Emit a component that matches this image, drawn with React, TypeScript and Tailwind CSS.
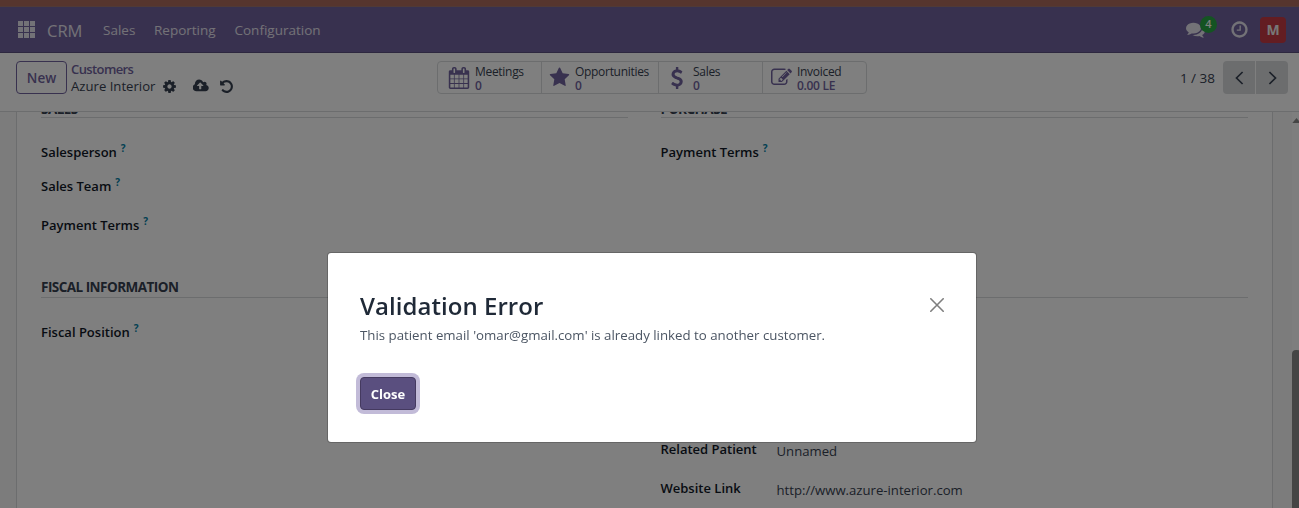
import type { ReactNode } from "react";

const paths = {
  star: "M1728 647q0 22-26 48l-363 354 86 500q1 7 1 20 0 21-10.5 35.5t-30.5 14.5q-19 0-40-12l-449-236-449 236q-22 12-40 12-21 0-31.5-14.5t-10.5-35.5q0-6 2-20l86-500-364-354q-25-27-25-48 0-37 56-46l502-73 225-455q19-41 49-41t49 41l225 455 502 73q56 9 56 46z",
  calendar:
    "M192 1664h288v-288h-288v288zm352 0h320v-288h-320v288zm-352-352h288v-320h-288v320zm352 0h320v-320h-320v320zm-352-384h288v-288h-288v288zm736 736h320v-288h-320v288zm-384-736h320v-288h-320v288zm768 736h288v-288h-288v288zm-384-352h320v-320h-320v320zm-352-864v-288q0-13-9.5-22.5t-22.5-9.5h-64q-13 0-22.5 9.5t-9.5 22.5v288q0 13 9.5 22.5t22.5 9.5h64q13 0 22.5-9.5t9.5-22.5zm736 864h288v-320h-288v320zm-384-384h320v-288h-320v288zm384 0h288v-288h-288v288zm32-480v-288q0-13-9.5-22.5t-22.5-9.5h-64q-13 0-22.5 9.5t-9.5 22.5v288q0 13 9.5 22.5t22.5 9.5h64q13 0 22.5-9.5t9.5-22.5zm384-64v1280q0 52-38 90t-90 38h-1408q-52 0-90-38t-38-90v-1280q0-52 38-90t90-38h128v-96q0-66 47-113t113-47h64q66 0 113 47t47 113v96h384v-96q0-66 47-113t113-47h64q66 0 113 47t47 113v96h128q52 0 90 38t38 90z",
  usd: "M1362 1185q0 153-99.5 263.5t-258.5 136.5v175q0 14-9 23t-23 9h-135q-13 0-22.5-9.5t-9.5-22.5v-175q-66-9-127.5-31t-101.5-44.5-74-48-46.5-37.5-17.5-18q-17-21-2-41l103-135q7-10 23-12 15-2 24 9l2 2q113 99 243 125 37 8 74 8 81 0 142.5-43t61.5-122q0-28-15-53t-33.5-42-58.5-37.5-66-32-80-32.5q-39-16-61.5-25t-61.5-26.5-62.5-31-56.5-35.5-53.5-42.5-43.5-49-35.5-58-21-66.5-8.5-78q0-138 98-242t255-134v-180q0-13 9.5-22.5t22.5-9.5h135q14 0 23 9t9 23v176q57 6 110.5 23t87 33.5 63.5 37.5 39 29 15 14q17 18 5 38l-81 146q-8 15-23 16-14 3-27-7-3-3-14.5-12t-39-26.5-58.5-32-74.5-26-85.5-11.5q-95 0-155 43t-60 111q0 26 8.5 48t29.5 41.5 39.5 33 56 31 60.5 27 70 27.5q53 20 81 31.5t76 35 75.5 42.5 62 50 53 63.5 31.5 76.5 13 94z",
  edit: "M888 1184l116-116-152-152-116 116v56h96v96h56zm440-720q-16-16-33 1l-350 350q-17 17-1 33t33-1l350-350q17-17 1-33zm80 594v190q0 119-84.5 203.5t-203.5 84.5h-832q-119 0-203.5-84.5t-84.5-203.5v-832q0-119 84.5-203.5t203.5-84.5h832q63 0 117 25 15 7 18 23 3 17-9 29l-49 49q-14 14-32 8-23-6-45-6h-832q-66 0-113 47t-47 113v832q0 66 47 113t113 47h832q66 0 113-47t47-113v-126q0-13 9-22l64-64q15-15 35-7t20 29zm-96-738l288 288-672 672h-288v-288zm444 132l-92 92-288-288 92-92q28-28 68-28t68 28l152 152q28 28 28 68t-28 68z",
  comments:
    "M1408 768q0 139-94 257t-256.5 186.5-353.5 68.5q-86 0-176-16-124 88-278 128-36 9-86 16h-3q-11 0-20.5-8t-11.5-21q-1-3-1-6.5t.5-6.5 2-6l2.5-5 3.5-5.5 4-5 4.5-5 4-4.5q5-6 23-25t26-29.5 22.5-29 25-38.5 20.5-44q-124-72-195-177t-71-224q0-139 94-257t256.5-186.5 353.5-68.5 353.5 68.5 256.5 186.5 94 257zm384 256q0 120-71 224.5t-195 176.5q10 24 20.5 44t25 38.5 22.5 29 26 29.5 23 25q1 1 4 4.5t4.5 5 4 5 3.5 5.5l2.5 5 2 6 .5 6.5-1 6.5q-3 14-13 22t-22 7q-50-7-86-16-154-40-278-128-90 16-176 16-271 0-472-132 58 4 88 4 161 0 309-45t264-129q125-92 192-212t67-254q0-77-23-152 129 71 204 178t75 230z",
  clock:
    "M1024 544v448q0 14-9 23t-23 9h-320q-14 0-23-9t-9-23v-64q0-14 9-23t23-9h224v-352q0-14 9-23t23-9h64q14 0 23 9t9 23zm416 352q0-148-73-273t-198-198-273-73-273 73-198 198-73 273 73 273 198 198 273 73 273-73 198-198 73-273zm224 0q0 209-103 385.5t-279.5 279.5-385.5 103-385.5-103-279.5-279.5-103-385.5 103-385.5 279.5-279.5 385.5-103 385.5 103 279.5 279.5 103 385.5z",
  cog: "M1152 896q0-106-75-181t-181-75-181 75-75 181 75 181 181 75 181-75 75-181zm512-109v222q0 12-8 23t-20 13l-185 28q-19 54-39 91 35 50 107 138 10 12 10 25t-9 23q-27 37-99 108t-94 71q-12 0-26-9l-138-108q-44 23-91 38-16 136-29 186-7 28-36 28h-222q-14 0-24.5-8.5t-11.5-21.5l-28-184q-49-16-90-37l-141 107q-10 9-25 9-14 0-25-11-126-114-165-168-7-10-7-23 0-12 8-23 15-21 51-66.5t54-70.5q-27-50-41-99l-183-27q-13-2-21-12.5t-8-23.5v-222q0-12 8-23t19-13l186-28q14-46 39-92-40-57-107-138-10-12-10-24 0-10 9-23 26-36 98.5-107.5t94.5-71.5q13 0 26 10l138 107q44-23 91-38 16-136 29-186 7-28 36-28h222q14 0 24.5 8.5t11.5 21.5l28 184q49 16 90 37l142-107q9-9 24-9 13 0 25 10 129 119 165 170 7 8 7 22 0 12-8 23-15 21-51 66.5t-54 70.5q26 50 41 98l183 28q13 2 21 12.5t8 23.5z",
  upload:
    "M1216 864q0-14-9-23l-352-352q-9-9-23-9t-23 9l-351 351q-10 12-10 24 0 14 9 23t23 9h224v352q0 13 9.5 22.5t22.5 9.5h192q13 0 22.5-9.5t9.5-22.5v-352h224q13 0 22.5-9.5t9.5-22.5zm640 288q0 159-112.5 271.5t-271.5 112.5h-1088q-185 0-316.5-131.5t-131.5-316.5q0-130 70-240t188-165q-2-30-2-43 0-212 150-362t362-150q156 0 285.5 87t188.5 231q71-62 166-62 106 0 181 75t75 181q0 76-41 138 130 31 213.5 135.5t83.5 238.5z",
  undo: "M1664 896q0 156-61 298t-164 245-245 164-298 61q-172 0-327-72.5t-264-204.5q-7-10-6.5-22.5t8.5-20.5l137-138q10-9 25-9 16 2 23 12 73 95 179 147t225 52q104 0 198.5-40.5t163.5-109.5 109.5-163.5 40.5-198.5-40.5-198.5-109.5-163.5-163.5-109.5-198.5-40.5q-98 0-188 35.5t-160 101.5l137 138q31 30 14 69-17 40-59 40h-448q-26 0-45-19t-19-45v-448q0-42 40-59 39-17 69 14l130 129q107-101 244.5-156.5t284.5-55.5q156 0 298 61t245 164 164 245 61 298z",
};

function Icon({ name, className, wide }: { name: keyof typeof paths; className: string; wide?: boolean }) {
  return (
    <svg viewBox={wide ? "-32 64 1920 1792" : "0 0 1792 1792"} fill="currentColor" className={`shrink-0 ${className}`}>
      <path d={paths[name]} />
    </svg>
  );
}

function Field({ label, help, value, className }: { label: string; help?: boolean; value?: string; className: string }) {
  return (
    <div className={`flex h-5 items-center whitespace-nowrap pt-0.5 font-semibold text-[#111827] ${className}`}>
      <span className={value ? "w-[116px]" : ""}>{label}</span>
      {help && <span className="mb-[9px] ml-1 text-[10px] font-bold text-[#0180a5]">?</span>}
      {value && <span className="mt-1 text-[13.15px] font-normal text-[#374151]">{value}</span>}
    </div>
  );
}

function Heading({ children, className }: { children?: ReactNode; className: string }) {
  return (
    <h2
      className={`flex h-[26px] shrink-0 items-end border-b border-[#d8dadd] text-[13.5px] font-bold tracking-[-0.53px] text-[#374151] ${className}`}
    >
      {children}
    </h2>
  );
}

function Stat({ icon, label, value, className }: { icon: ReactNode; label: string; value: string; className: string }) {
  return (
    <div className={`flex items-center border-[#d8dadd] ${className}`}>
      {icon}
      <div className="whitespace-nowrap pt-[3px] text-[12px] leading-[14px] tracking-[-0.3px] text-[#374151]">
        <div>{label}</div>
        <div className="font-semibold text-[#71639e]">{value}</div>
      </div>
    </div>
  );
}

function Navbar() {
  return (
    <nav className="flex h-[46px] shrink-0 items-center border-b border-[#5a4f7f] bg-[#71639e] pr-[13px] text-[13.5px] text-[#e6e4ee]">
      <svg viewBox="0 0 17 17" className="ml-[18px] size-[17px]" fill="currentColor">
        {[0, 6, 12].map((y) => [0, 6, 12].map((x) => <rect key={`${x}-${y}`} x={x} y={y} width="5" height="5" />))}
      </svg>
      <span className="ml-3 w-[56px] pt-[3px] text-[16.5px]">CRM</span>
      <span className="w-[51px] pt-0.5">Sales</span>
      <span className="w-[80.5px] pt-0.5">Reporting</span>
      <span className="pt-0.5">Configuration</span>
      <div className="relative ml-auto mr-[25px] flex">
        <Icon name="comments" className="size-[19px]" />
        <span className="absolute -top-[4px] left-[14px] flex size-[17px] items-center justify-center rounded-full bg-[#28a745] text-[11px] font-semibold text-white">
          4
        </span>
      </div>
      <Icon name="clock" className="mb-px mr-[11px] size-[19px]" />
      <span className="flex size-[26px] items-center justify-center rounded bg-[#c63a45] text-[14px] font-bold text-[#eeeeee]">
        M
      </span>
    </nav>
  );
}

function ControlPanel() {
  return (
    <header className="flex h-[59px] shrink-0 items-start border-b border-[#d8dadd] bg-white pl-4 pr-[11px] pt-2">
      <button className="h-[33px] w-[51px] rounded border border-[#71639e] pt-0.5 text-[13.5px] font-semibold text-[#71639e]">
        New
      </button>
      <div className="ml-1 w-[366px] whitespace-nowrap leading-[17px] text-[#374151]">
        <div className="font-semibold tracking-[-0.6px] text-[#71639e]">Customers</div>
        <div className="flex items-center">
          <span className="w-[91px] text-[13.15px]">Azure Interior</span>
          <Icon name="cog" className="size-[15px]" />
          <Icon name="upload" wide className="ml-[16px] h-[15px] w-4" />
          <Icon name="undo" className="ml-[10px] size-[15px]" />
        </div>
      </div>
      <div className="flex h-[33px] w-[430px] rounded border border-[#d8dadd]">
        <Stat className="w-[104px] border-r pl-2.5" icon={<Icon name="calendar" className="mr-[5px] size-[22px] text-[#71639e]" />} label="Meetings" value="0" />
        <Stat className="w-[117px] border-r pl-[7px]" icon={<Icon name="star" className="mr-[5px] size-[21px] text-[#71639e]" />} label="Opportunities" value="0" />
        <Stat className="w-[104px] border-r pl-[7px]" icon={<Icon name="usd" className="mr-[5px] size-[22px] text-[#71639e]" />} label="Sales" value="0" />
        <Stat className="pl-2" icon={<Icon name="edit" className="mr-[5px] size-[21px] text-[#71639e]" />} label="Invoiced" value="0.00 LE" />
      </div>
      <div className="ml-auto flex items-center">
        <span className="mr-2 pt-0.5 text-[13.5px] text-[#374151]">1 / 38</span>
        <button className="flex h-[33px] w-8 items-center justify-center rounded-l bg-[#d8dadd] text-[#374151]">
          <svg viewBox="0 0 9 14" className="h-[14px] w-[9px]" fill="none" stroke="currentColor" strokeWidth="1.7">
            <path d="M7.6 1L1.5 7l6.1 6" />
          </svg>
        </button>
        <button className="ml-px flex h-[33px] w-8 items-center justify-center rounded-r bg-[#d8dadd] text-[#374151]">
          <svg viewBox="0 0 9 14" className="h-[14px] w-[9px]" fill="none" stroke="currentColor" strokeWidth="1.7">
            <path d="M1.4 1l6.1 6-6.1 6" />
          </svg>
        </button>
      </div>
    </header>
  );
}

function Form() {
  return (
    <main className="flex min-h-0 flex-1 overflow-hidden bg-[#f8f8f9] pl-4">
      <div className="flex w-[1257px] shrink-0 gap-[32.5px] border-x border-[#d8dadd] bg-white px-6">
        <div className="w-[587px]">
          <Heading className="-mt-5 leading-4">SALES</Heading>
          <Field className="mt-6" label="Salesperson" help />
          <Field className="mt-3.5" label="Sales Team" help />
          <Field className="mt-[19px]" label="Payment Terms" help />
          <Heading className="mt-[37px] leading-5">FISCAL INFORMATION</Heading>
          <Field className="mt-6" label="Fiscal Position" help />
        </div>
        <div className="w-[587.5px]">
          <Heading className="-mt-5 leading-4">PURCHASE</Heading>
          <Field className="mt-6" label="Payment Terms" help />
          <Heading className="mt-[110px]" />
          <Field className="mt-[141px]" label="Related Patient" value="Unnamed" />
          <Field className="mt-[19px]" label="Website Link" value="http://www.azure-interior.com" />
        </div>
      </div>
      <div className="ml-[19px] flex w-[7px] shrink-0 flex-col overflow-hidden bg-[#fcfcfc] pt-1.5">
        <svg viewBox="0 0 10 6" className="h-[5px] w-[9px] shrink-0" fill="#8b8b8b">
          <path d="M0 6L5 0l5 6z" />
        </svg>
        <div className="mt-[227px] w-[9px] flex-1 rounded-t-[4px] bg-[#8b8b8b]" />
      </div>
    </main>
  );
}

function Dialog() {
  return (
    <div className="fixed inset-0 flex items-start justify-center bg-black/50 pl-[5px] pt-[252px]">
      <div className="relative flex h-[191px] w-[650px] flex-col items-start rounded border border-black/20 bg-white bg-clip-padding px-8 pt-[34px]">
        <h1 className="whitespace-nowrap text-[24px] font-semibold leading-[38px] tracking-[0.05px] text-[#1f2937]">
          Validation Error
        </h1>
        <p className="whitespace-nowrap text-[13.27px] leading-5 text-[#4b5563]">
          This patient email 'omar@gmail.com' is already linked to another customer.
        </p>
        <button className="mt-8 h-[33px] w-[56px] rounded border border-[#453a60] bg-[#5a4f7f] pt-0.5 font-bold text-white ring-4 ring-[#c2bbd8]">
          Close
        </button>
        <svg viewBox="0 0 14 14" className="absolute right-8 top-[45px] size-[14px]" fill="none" stroke="#7f7f7f" strokeWidth="1.6" strokeLinecap="round">
          <path d="M0.8 0.8l12.4 12.4M13.2 0.8L0.8 13.2" />
        </svg>
      </div>
    </div>
  );
}

export default function App() {
  return (
    <div className="flex h-[508px] w-[1299px] flex-col overflow-hidden bg-white font-['Open_Sans',sans-serif] text-[13px]">
      <div className="h-[7px] shrink-0 border-b border-[#a1756e] bg-[#ac6a5c]" />
      <Navbar />
      <ControlPanel />
      <Form />
      <Dialog />
    </div>
  );
}
